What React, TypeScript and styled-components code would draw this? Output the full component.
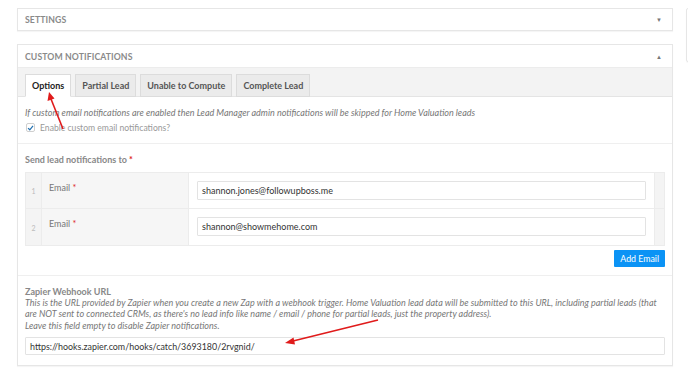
import React from "react";
import styled, { createGlobalStyle } from "styled-components";

const Global = createGlobalStyle`
  html, body { margin: 0; padding: 0; background: #fff; }
  body { font-family: Lato, "Liberation Sans", sans-serif; color: #555; }
  * { box-sizing: border-box; }
`;

const Page = styled.div`
  position: relative;
  display: flex;
  gap: 13px;
  padding: 8px 0 0 17px;
  width: 688px;
  height: 379px;
  overflow: hidden;
`;

const Main = styled.div`
  width: 656px;
  display: flex;
  flex-direction: column;
  gap: 13px;
  flex-shrink: 0;
`;

const SideBox = styled.div`
  width: 30px;
  height: 54px;
  flex-shrink: 0;
  border: 1px solid #e6e6e6;
  border-radius: 2px;
  background: #fff;
  box-shadow: 0 1px 1px rgba(0, 0, 0, 0.04);
`;

const Panel = styled.div`
  border: 1px solid #e6e6e6;
  background: #fff;
  box-shadow: 0 1px 1px rgba(0, 0, 0, 0.04);
`;

const PanelHeader = styled.div<{ $h: number }>`
  height: ${(p) => p.$h}px;
  display: flex;
  align-items: center;
  justify-content: space-between;
  padding: 0 10px 0 7px;
  font-size: 8.7px;
  font-weight: 700;
  color: #8a8a8a;
  letter-spacing: 0.1px;
`;

const Caret = styled.span`
  font-size: 6px;
  color: #777;
`;

const TabStrip = styled.div`
  background: #f3f3f3;
  border-top: 1px solid #ececec;
  border-bottom: 1px solid #e4e4e4;
  height: 30px;
  display: flex;
  align-items: flex-end;
  gap: 4px;
  padding: 0 0 0 7px;
`;

const Tab = styled.div<{ $active?: boolean }>`
  height: 23px;
  padding: 0 6px;
  display: flex;
  align-items: center;
  font-size: 9px;
  font-weight: 700;
  color: ${(p) => (p.$active ? "#222" : "#555")};
  background: ${(p) => (p.$active ? "#fff" : "#ebebeb")};
  border: 1px solid #dcdcdc;
  border-bottom: ${(p) => (p.$active ? "1px solid #fff" : "1px solid #dcdcdc")};
  margin-bottom: -1px;
`;

const Section = styled.div<{ $pt: number; $pb: number; $border?: boolean }>`
  padding: ${(p) => p.$pt}px 7px ${(p) => p.$pb}px 7px;
  border-bottom: ${(p) => (p.$border ? "1px solid #efefef" : "none")};
`;

const Note = styled.div`
  font-size: 9px;
  font-style: italic;
  color: #777;
  line-height: 11.5px;
  white-space: nowrap;
`;

const CheckRow = styled.label`
  display: flex;
  align-items: center;
  gap: 5px;
  margin-top: 4px;
  font-size: 8.6px;
  color: #999;
  padding-left: 1px;
`;

const Check = styled.span`
  width: 9px;
  height: 9px;
  border: 1px solid #cfcfcf;
  border-radius: 2px;
  display: flex;
  align-items: center;
  justify-content: center;
  background: #fff;
`;

const Label = styled.div`
  font-size: 9px;
  font-weight: 700;
  color: #888;
`;

const Req = styled.span`
  color: #d22;
`;

const Table = styled.div`
  margin-top: 7px;
  border: 1px solid #ececec;
  display: grid;
  grid-template-columns: 16px 147px 1fr 10px;
`;

const NumCell = styled.div<{ $last?: boolean }>`
  height: 36px;
  background: #f4f4f4;
  border-bottom: ${(p) => (p.$last ? "none" : "1px solid #ececec")};
  border-right: 1px solid #ececec;
  font-size: 7px;
  color: #bbb;
  display: flex;
  align-items: center;
  justify-content: center;
  padding-top: 2px;
`;

const LabelCell = styled.div<{ $last?: boolean }>`
  height: 36px;
  background: #f6f6f6;
  border-bottom: ${(p) => (p.$last ? "none" : "1px solid #ececec")};
  border-right: 1px solid #ececec;
  padding: 9px 0 0 7px;
  font-size: 9px;
  color: #777;
  font-weight: 400;
`;

const InputCell = styled.div<{ $last?: boolean }>`
  height: 36px;
  background: #fff;
  border-bottom: ${(p) => (p.$last ? "none" : "1px solid #ececec")};
  padding: 0 8px;
  display: flex;
  align-items: center;
`;

const EndCell = styled.div<{ $last?: boolean }>`
  height: 36px;
  background: #f4f4f4;
  border-left: 1px solid #ececec;
  border-bottom: ${(p) => (p.$last ? "none" : "1px solid #ececec")};
`;

const TextField = styled.div<{ $h?: number }>`
  flex: 1;
  height: ${(p) => p.$h ?? 19}px;
  border: 1px solid #e3e3e3;
  border-radius: 1px;
  display: flex;
  align-items: center;
  padding: 0 4px;
  font-size: 9px;
  color: #333;
  background: #fff;
`;

const ButtonRow = styled.div`
  display: flex;
  justify-content: flex-end;
  margin-top: 4px;
`;

const Button = styled.div`
  background: #0b93f5;
  color: #fff;
  font-size: 8.8px;
  height: 17px;
  padding: 0 6px;
  display: flex;
  align-items: center;
  border-radius: 1px;
`;

const UrlField = styled(TextField)`
  margin-top: 6px;
  flex: none;
  height: 18px;
  font-size: 8.9px;
`;

const Overlay = styled.svg`
  position: absolute;
  left: 0;
  top: 0;
  pointer-events: none;
`;

export default function App() {
  const rows = [
    "shannon.jones@followupboss.me",
    "shannon@showmehome.com",
  ];
  return (
    <>
      <Global />
      <Page>
        <Main>
          <Panel>
            <PanelHeader $h={21}>
              SETTINGS <Caret>▼</Caret>
            </PanelHeader>
          </Panel>
          <Panel>
            <PanelHeader $h={22}>
              CUSTOM NOTIFICATIONS <Caret>▲</Caret>
            </PanelHeader>
            <TabStrip>
              <Tab $active>Options</Tab>
              <Tab>Partial Lead</Tab>
              <Tab>Unable to Compute</Tab>
              <Tab>Complete Lead</Tab>
            </TabStrip>
            <Section $pt={10} $pb={10} $border>
              <Note>
                If custom email notifications are enabled then Lead Manager admin
                notifications will be skipped for Home Valuation leads
              </Note>
              <CheckRow>
                <Check>
                  <svg width="8" height="8" viewBox="0 0 10 10">
                    <path
                      d="M1.5 5.2 L4 7.6 L8.6 2"
                      fill="none"
                      stroke="#2271b1"
                      strokeWidth="1.8"
                    />
                  </svg>
                </Check>
                Enable custom email notifications?
              </CheckRow>
            </Section>
            <Section $pt={10} $pb={8} $border>
              <Label>
                Send lead notifications to <Req>*</Req>
              </Label>
              <Table>
                {rows.map((email, i) => {
                  const last = i === rows.length - 1;
                  return (
                    <React.Fragment key={email}>
                      <NumCell $last={last}>{i + 1}</NumCell>
                      <LabelCell $last={last}>
                        Email <Req>*</Req>
                      </LabelCell>
                      <InputCell $last={last}>
                        <TextField>{email}</TextField>
                      </InputCell>
                      <EndCell $last={last} />
                    </React.Fragment>
                  );
                })}
              </Table>
              <ButtonRow>
                <Button>Add Email</Button>
              </ButtonRow>
            </Section>
            <Section $pt={10} $pb={10}>
              <Label>Zapier Webhook URL</Label>
              <Note>
                This is the URL provided by Zapier when you create a new Zap with a
                webhook trigger. Home Valuation lead data will be submitted to this
                URL, including partial leads (that
                <br />
                are NOT sent to connected CRMs, as there's no lead info like name /
                email / phone for partial leads, just the property address).
                <br />
                Leave this field empty to disable Zapier notifications.
              </Note>
              <UrlField>https://hooks.zapier.com/hooks/catch/3693180/2rvgnid/</UrlField>
            </Section>
          </Panel>
        </Main>
        <SideBox />
        <Overlay width="688" height="379" viewBox="0 0 688 379">
          <line x1="63" y1="129" x2="51" y2="99" stroke="#e01b1b" strokeWidth="1.6" />
          <polygon points="49,92 47.5,101 54.5,98.5" fill="#e01b1b" />
          <line x1="378" y1="320" x2="293" y2="341" stroke="#e01b1b" strokeWidth="1.6" />
          <polygon points="285,343 293.5,337.5 295,344.5" fill="#e01b1b" />
        </Overlay>
      </Page>
    </>
  );
}
